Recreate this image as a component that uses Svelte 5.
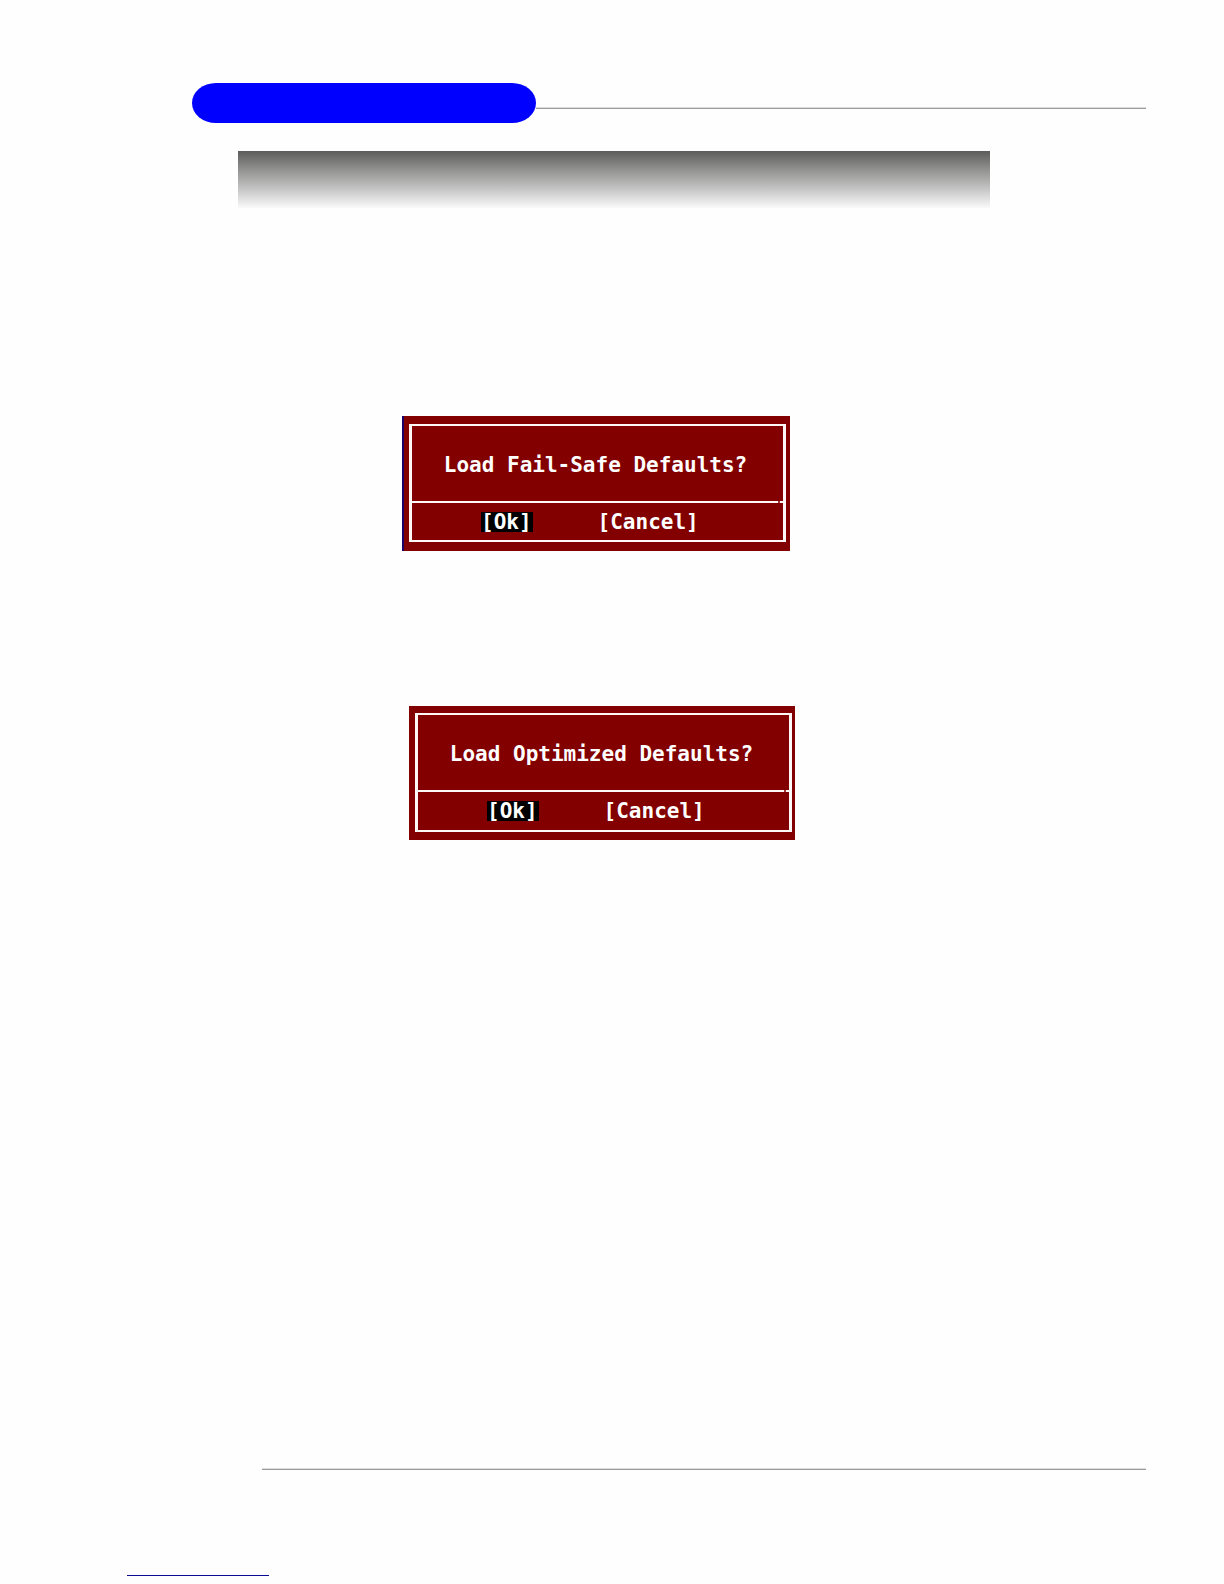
<script>
  const dialogs = [
    { id: 'fail-safe', message: 'Load Fail-Safe Defaults?' },
    { id: 'optimized', message: 'Load Optimized Defaults?' }
  ];
</script>

<div class="page">
  <header>
    <div class="tab"></div>
    <div class="rule"></div>
  </header>

  <main>
    <div class="banner"></div>
    {#each dialogs as { id, message }}
      <section class="dialog {id}" role="dialog" aria-labelledby={id}>
        <div class="frame">
          <p class="message" {id}>{message}</p>
          <div class="divider"></div>
          <div class="actions">
            <button type="button" class="selected">[Ok]</button>
            <button type="button">[Cancel]</button>
          </div>
        </div>
      </section>
    {/each}
  </main>

  <footer>
    <div class="rule"></div>
    <div class="link-line"></div>
  </footer>
</div>

<style>
  :global(body) {
    margin: 0;
    background: #fefefe;
  }

  .page {
    display: flex;
    flex-direction: column;
    box-sizing: border-box;
    min-height: 100vh;
    padding: 83px 78px 8px 127px;
  }

  header {
    display: flex;
    align-items: flex-start;
    margin-left: 65px;
  }

  .tab {
    flex: 0 0 344px;
    height: 40px;
    border-radius: 24px / 20px;
    background: #0000fe;
  }

  .rule {
    flex: 1;
    height: 1px;
    border-top: 1px solid #dcdcdc;
    background: #9c9c9c;
  }

  header .rule {
    margin-top: 24px;
  }

  main {
    flex: 1;
    display: flex;
    flex-direction: column;
    align-items: flex-start;
    margin: 28px 156px 0 111px;
  }

  .banner {
    align-self: stretch;
    height: 57px;
    background: linear-gradient(#5c5c5c, #8a8a88 28%, #c4c4c4 66%, #fafafa);
  }

  .dialog {
    box-sizing: border-box;
    width: 100%;
    background: #830000;
    color: #fff;
    font-family: "DejaVu Sans Mono", "Liberation Mono", monospace;
    font-weight: bold;
    font-size: 21px;
    line-height: 20px;
  }

  .fail-safe {
    max-width: 388px;
    margin: 208px 0 0 164px;
    padding: 8px 4px 9px 5px;
    border-left: 2px solid #1c0068;
  }

  .optimized {
    max-width: 386px;
    margin: 155px 0 0 171px;
    padding: 7px 3px 8px 6px;
  }

  .frame {
    border: solid #fff8f6;
    border-width: 2px 3px;
  }

  .message {
    margin: 0;
    padding: 29px 4px 26px 0;
    text-align: center;
    white-space: nowrap;
  }

  .divider {
    height: 2px;
    background: linear-gradient(to right, #fff8f6 calc(100% - 5px), #a03838 0, #a03838 calc(100% - 3px), #fff8f6 0);
  }

  .actions {
    display: flex;
    gap: 65px;
    padding: 9px 0 8px 69px;
  }

  .optimized .actions {
    padding-bottom: 9px;
  }

  button {
    padding: 0;
    border: 0;
    background: none;
    color: inherit;
    font: inherit;
  }

  .selected {
    padding-right: 1px;
    background: #000;
  }

  footer .rule {
    margin-left: 135px;
  }

  .link-line {
    width: 142px;
    height: 1px;
    margin-top: 105px;
    background: #0c0c94;
  }
</style>
